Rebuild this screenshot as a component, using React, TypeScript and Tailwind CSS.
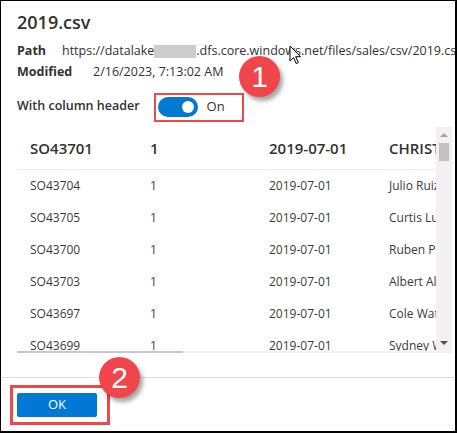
const rows = [
  ["SO43704", "1", "2019-07-01", "Julio Ruiz"],
  ["SO43705", "1", "2019-07-01", "Curtis Lu"],
  ["SO43700", "1", "2019-07-01", "Ruben Prasad"],
  ["SO43703", "1", "2019-07-01", "Albert Alvarez"],
  ["SO43697", "1", "2019-07-01", "Cole Watson"],
  ["SO43699", "1", "2019-07-01", "Sydney Wright"],
];

const Badge = ({ n, className }: { n: string; className: string }) => (
  <div
    className={`absolute w-[41px] h-[41px] rounded-full bg-[#f0454b] text-white flex items-center justify-center text-[30px] leading-none shadow-[3px_4px_4px_rgba(0,0,0,0.35)] ${className}`}
    style={{ fontFamily: '"Liberation Sans", Arial, sans-serif' }}
  >
    {n}
  </div>
);

const Cursor = () => (
  <svg className="absolute left-[288px] top-[44px]" width="14" height="20" viewBox="0 0 14 20">
    <path
      d="M1 1 L1 16 L4.5 12.5 L7.2 18.5 L9.3 17.6 L6.7 11.7 L11.5 11.7 Z"
      fill="white"
      stroke="black"
      strokeWidth="1"
      strokeLinejoin="round"
    />
  </svg>
);

export default function App() {
  return (
    <div
      className="relative w-[457px] h-[433px] bg-white border-l border-t border-r-2 border-b-2 border-black overflow-hidden text-[#323130]"
      style={{ fontFamily: '"Open Sans", "Noto Sans", sans-serif' }}
    >
      <div className="pl-[16px] pt-[9px] text-[18px] leading-[24px] font-semibold">2019.csv</div>

      <div className="pl-[16px] mt-[7px] flex items-center h-[20px] text-[12.5px] whitespace-nowrap">
        <span className="font-bold w-[45px] shrink-0">Path</span>
        <span className="flex items-center">
          https://datalake
          <span className="inline-block w-[42px] h-[13px] bg-[#cdcdcd]" />
          .dfs.core.windows.net/files/sales/csv/2019.csv
        </span>
      </div>
      <div className="pl-[16px] mt-[1px] flex items-center h-[20px] text-[12.5px] whitespace-nowrap">
        <span className="font-bold w-[76px] shrink-0">Modified</span>
        <span>2/16/2023, 7:13:02 AM</span>
      </div>

      <div className="pl-[16px] mt-[14px] flex items-center h-[21px]">
        <span className="text-[12.5px] font-semibold">With column header</span>
        <div className="ml-[18px] w-[40px] h-[20px] rounded-full bg-[#0078d4] flex items-center justify-end pr-[4px]">
          <div className="w-[12px] h-[12px] rounded-full bg-white" />
        </div>
        <span className="ml-[9px] text-[13px]">On</span>
      </div>

      <div className="ml-[16px] mt-[10px] w-[435px] h-[226px] flex overflow-hidden">
        <div className="flex-1 flex flex-col overflow-hidden">
          <div className="h-[43px] shrink-0 flex items-center border-b border-[#edebe9] text-[15px] font-semibold whitespace-nowrap">
            <div className="w-[120px] pl-[13px]">SO43701</div>
            <div className="w-[120px] pl-[13px]">1</div>
            <div className="w-[120px] pl-[12px]">2019-07-01</div>
            <div className="flex-1 pl-[12px] overflow-hidden">CHRISTY ZHU</div>
          </div>
          <div className="flex-1 overflow-hidden text-[#3b3a39]">
            {rows.map((r) => (
              <div key={r[0]} className="h-[32px] flex items-center text-[12px] whitespace-nowrap">
                <div className="w-[120px] pl-[13px]">{r[0]}</div>
                <div className="w-[120px] pl-[13px]">{r[1]}</div>
                <div className="w-[120px] pl-[12px]">{r[2]}</div>
                <div className="flex-1 pl-[12px] overflow-hidden">{r[3]}</div>
              </div>
            ))}
          </div>
          <div className="h-[2px] shrink-0 bg-[#f3eff3]">
            <div className="w-[166px] h-full bg-[#c8c6c8]" />
          </div>
        </div>
        <div className="w-[16px] bg-[#f3eff3] flex flex-col items-center pt-[6px]">
          <div className="w-0 h-0 border-l-[4px] border-r-[4px] border-b-[4px] border-l-transparent border-r-transparent border-b-[#a3a3a3]" />
          <div className="mt-[6px] w-[10px] h-[18px] bg-[#c1c1c1]" />
          <div className="flex-1" />
          <div className="mb-[8px] w-0 h-0 border-l-[4px] border-r-[4px] border-t-[4px] border-l-transparent border-r-transparent border-t-[#505050]" />
        </div>
      </div>

      <div className="mt-[24px] border-t border-[#e1dfdd] pt-[15px] pl-[16px]">
        <button className="w-[80px] h-[24px] bg-[#0078d4] text-white text-[13px] rounded-[2px] flex items-center justify-center">
          OK
        </button>
      </div>

      <div className="absolute left-[153px] top-[92px] w-[90px] h-[29px] border-[2px] border-[#f0484a]" />
      <div className="absolute left-[9px] top-[384px] w-[100px] h-[40px] border-[3px] border-[#f0484a]" />
      <Badge n="1" className="left-[238px] top-[55px]" />
      <Badge n="2" className="left-[98px] top-[356px]" />
      <Cursor />
    </div>
  );
}
